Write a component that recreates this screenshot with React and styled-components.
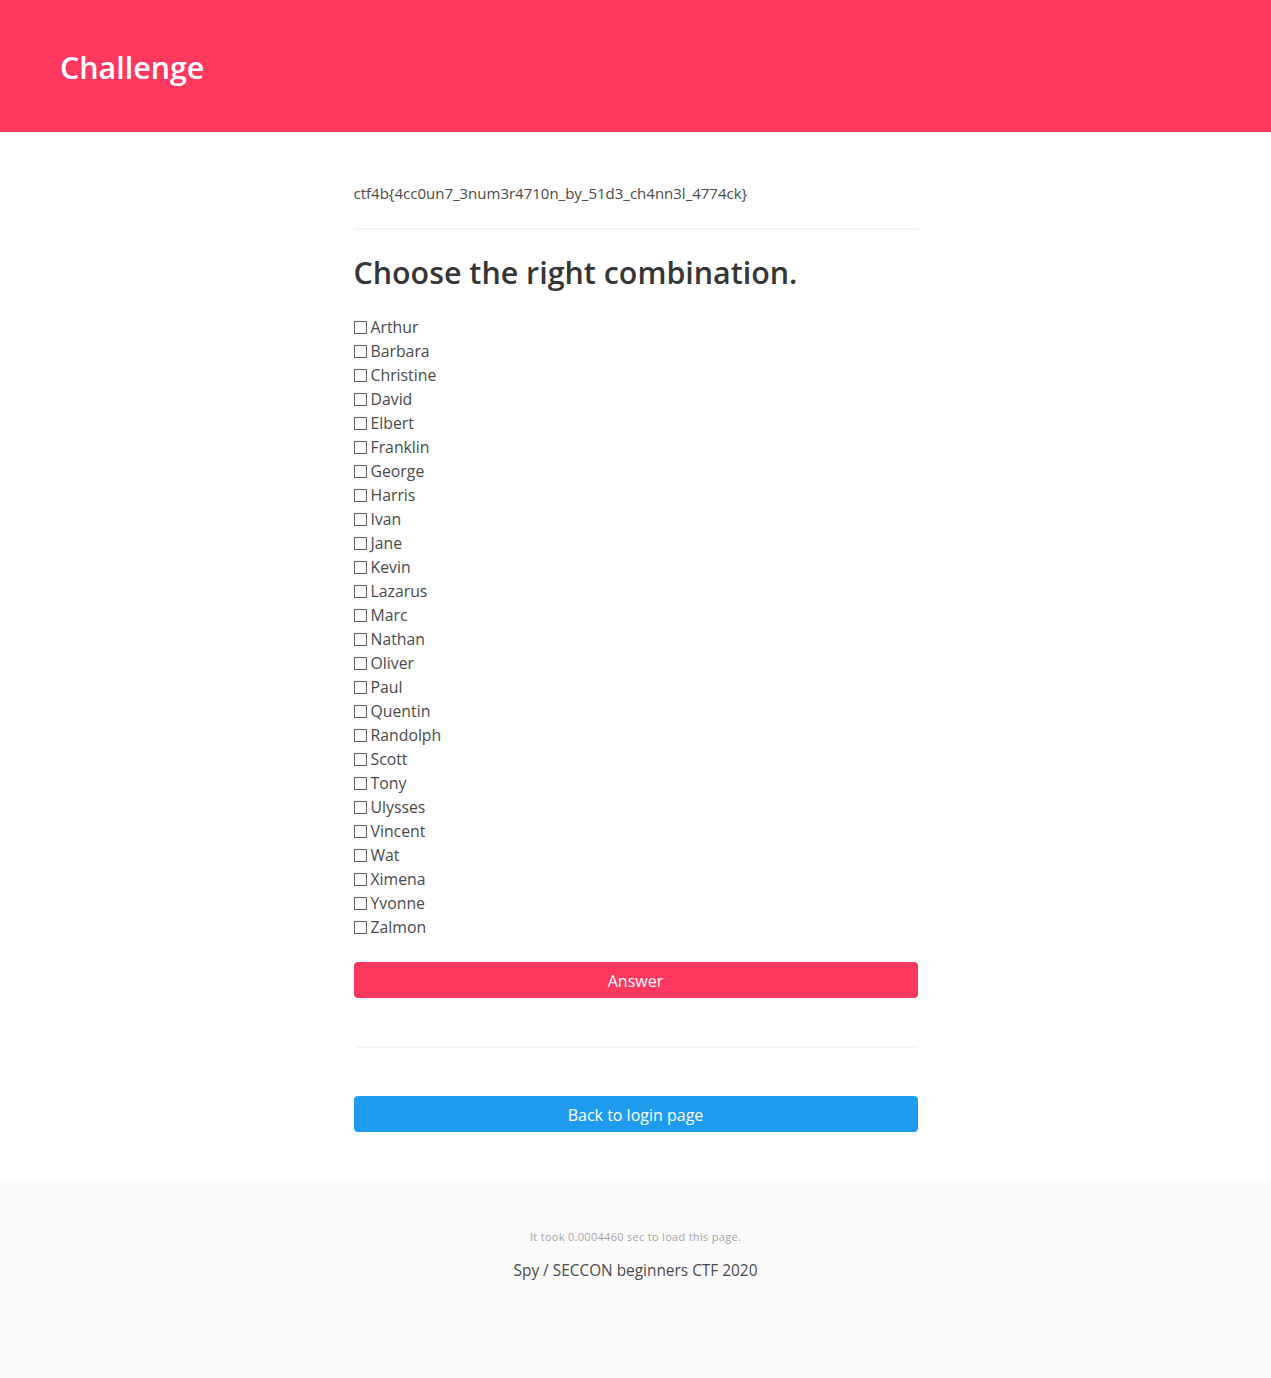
import styled, { createGlobalStyle } from 'styled-components';

const names = [
  'Arthur', 'Barbara', 'Christine', 'David', 'Elbert', 'Franklin', 'George',
  'Harris', 'Ivan', 'Jane', 'Kevin', 'Lazarus', 'Marc', 'Nathan', 'Oliver',
  'Paul', 'Quentin', 'Randolph', 'Scott', 'Tony', 'Ulysses', 'Vincent', 'Wat',
  'Ximena', 'Yvonne', 'Zalmon',
];

const GlobalStyle = createGlobalStyle`
  html, body {
    margin: 0;
    padding: 0;
    background: #fff;
  }
  body {
    font-family: "Open Sans", "Noto Sans", sans-serif;
    font-size: 16px;
    line-height: 1.5;
    color: #4a4a4a;
    -webkit-font-smoothing: antialiased;
  }
`;

const Hero = styled.header`
  background: #ff3860;
  padding: 50px 60px 46px;
`;

const HeroTitle = styled.h1`
  margin: 0;
  color: #fff;
  font-size: 30.4px;
  font-weight: 600;
  line-height: 36px;
`;

const Section = styled.main`
  padding: 48px 24px;
  display: flex;
  justify-content: center;
`;

const Column = styled.div`
  width: 564px;
`;

const Flag = styled.p`
  margin: 0;
  font-size: 15px;
  line-height: 24px;
  padding-top: 1px;
  margin-bottom: -1px;
`;

const Rule = styled.hr`
  border: none;
  height: 2px;
  background: #f5f5f5;
  margin: ${(p) => p.$space} 0;
`;

const Title = styled.h2`
  margin: 0 0 23px;
  padding-top: 1px;
  color: #363636;
  font-size: 30.4px;
  font-weight: 600;
  line-height: 36px;
`;

const Form = styled.form`
  display: flex;
  flex-direction: column;
`;

const Option = styled.label`
  display: block;
  font-size: 15.8px;
  line-height: 24px;
  cursor: pointer;
  padding-top: 1px;
  margin-bottom: -1px;
`;

const Box = styled.input`
  appearance: none;
  width: 13px;
  height: 13px;
  margin: 0 4px 0 0;
  border: 1px solid #5f5f5f;
  background: #fff;
  vertical-align: baseline;
  position: relative;
  top: 1px;
`;

const Button = styled.button`
  display: block;
  width: 100%;
  height: 36px;
  border: none;
  border-radius: 4px;
  background: ${(p) => p.$color};
  color: #fff;
  font-family: inherit;
  font-size: 16px;
  padding-top: 2px;
  cursor: pointer;
  margin-top: ${(p) => p.$top || '0'};
`;

const Footer = styled.footer`
  background: #fafafa;
  padding: 48px 24px 96px;
  text-align: center;
`;

const Timing = styled.p`
  margin: 0 0 12px;
  font-size: 11px;
  line-height: 18px;
  letter-spacing: 0.3px;
  color: #a5a5a5;
`;

const Credit = styled.p`
  margin: 0;
  font-size: 15.4px;
  line-height: 24px;
  padding-top: 1px;
  margin-bottom: -1px;
`;

const App = () => (
  <>
    <GlobalStyle />
    <Hero>
      <HeroTitle>Challenge</HeroTitle>
    </Hero>
    <Section>
      <Column>
        <Flag>ctf4b{'{'}4cc0un7_3num3r4710n_by_51d3_ch4nn3l_4774ck{'}'}</Flag>
        <Rule $space="24px" />
        <Title>Choose the right combination.</Title>
        <Form onSubmit={(e) => e.preventDefault()}>
          {names.map((name) => (
            <Option key={name}>
              <Box type="checkbox" name={name} />
              {name}
            </Option>
          ))}
          <Button type="submit" $color="#ff3860" $top="24px">Answer</Button>
        </Form>
        <Rule $space="48px" />
        <Button type="button" $color="#209cee">Back to login page</Button>
      </Column>
    </Section>
    <Footer>
      <Timing>It took 0.0004460 sec to load this page.</Timing>
      <Credit>Spy / SECCON beginners CTF 2020</Credit>
    </Footer>
  </>
);

export default App;
